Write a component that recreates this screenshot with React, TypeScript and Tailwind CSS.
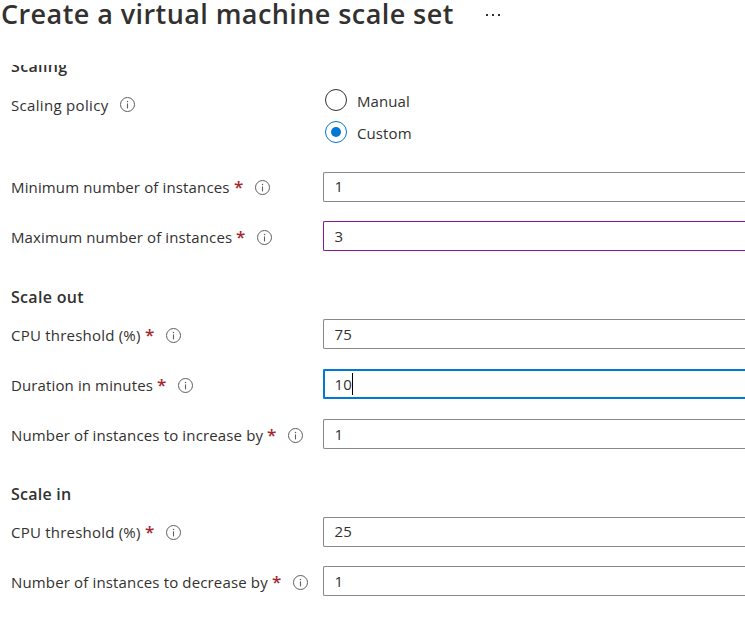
import React from 'react';

function InfoIcon() {
  return (
    <svg viewBox="0 0 16 16" className="size-4 shrink-0" fill="none">
      <circle cx="7.5" cy="7.5" r="7" stroke="#605e5c" strokeWidth="1" />
      <path d="M7.5 6.4v5" stroke="#605e5c" strokeWidth="1.1" />
      <circle cx="7.5" cy="4.4" r="0.75" fill="#605e5c" />
    </svg>
  );
}

type RowProps = {
  label: string;
  width: string;
  tracking: string;
  value: string;
  gap?: string;
  raised?: boolean;
  tone?: 'normal' | 'changed' | 'focused';
};

const tones = {
  normal: 'border-y border-l border-[#8a8886]',
  changed: 'border-y border-l border-[#881798]',
  focused: 'border-y-2 border-l-2 border-[#0078d4]',
};

function Row({ label, width, tracking, value, gap = '', raised = false, tone = 'normal' }: RowProps) {
  return (
    <div className={`flex h-[30px] ${gap}`}>
      <div className={`flex w-[312px] shrink-0 items-center ${raised ? 'pt-[2px]' : 'pt-[4px]'}`}>
        <span className={`-mt-[3px] shrink-0 whitespace-nowrap ${width} ${tracking}`}>{label}</span>
        <span className="-mt-[3px] ml-[4px] w-[21px] shrink-0 text-[17px] font-semibold text-[#a4262c]">*</span>
        <InfoIcon />
      </div>
      <div className={`flex h-[30px] flex-1 items-center rounded-l-[2px] ${tones[tone]} ${tone === 'focused' ? 'pl-[9.5px]' : 'pl-[10.5px]'}`}>
        <span className={`text-[15px] tracking-[0.1px] ${raised ? '-mt-[2px]' : '-mt-px'}`}>{value}</span>
        {tone === 'focused' && <span className="-mt-px h-[22px] w-px bg-black" />}
      </div>
    </div>
  );
}

function Radio({ label, checked = false }: { label: string; checked?: boolean }) {
  return (
    <div className="flex h-8 items-center gap-[10px]">
      <span className={`flex size-[22px] items-center justify-center rounded-full border ${checked ? 'border-[#0078d4]' : 'border-[#323130]'}`}>
        {checked && <span className="size-[10px] rounded-full bg-[#0078d4]" />}
      </span>
      <span className="pt-[2px] tracking-[0.1px]">{label}</span>
    </div>
  );
}

export default function App() {
  return (
    <main className="h-[624px] w-[745px] overflow-hidden bg-white font-['Open_Sans',sans-serif] text-[15px] leading-5 text-[#323130]">
      <header className="flex h-[65px] items-start pl-[1px]">
        <h1 className="w-[485px] whitespace-nowrap text-[27px] font-semibold leading-[28px] tracking-[0.42px]">Create a virtual machine scale set</h1>
        <div className="mt-[14px] flex gap-[4px]">
          <span className="size-[2px] bg-[#323130]" />
          <span className="size-[2px] bg-[#323130]" />
          <span className="size-[2px] bg-[#323130]" />
        </div>
      </header>
      <section className="pl-[11px]">
        <div className="h-[19px] overflow-hidden">
          <h2 className="-mt-[9px] text-[16px] font-semibold tracking-[0.35px]">Scaling</h2>
        </div>
        <div className="flex h-[88px]">
          <div className="flex h-[42px] w-[314px] items-center">
            <span className="w-[109px] whitespace-nowrap tracking-[0.32px]">Scaling policy</span>
            <InfoIcon />
          </div>
          <div>
            <Radio label="Manual" />
            <Radio label="Custom" checked />
          </div>
        </div>
        <Row label="Minimum number of instances" width="w-[219px]" tracking="tracking-[0.14px]" value="1" raised />
        <Row label="Maximum number of instances" width="w-[221px]" tracking="tracking-[0.12px]" value="3" gap="mt-[19px]" tone="changed" />
        <h2 className="mt-[36px] h-[32px] text-[16px] font-semibold tracking-[0.3px]">Scale out</h2>
        <Row label="CPU threshold (%)" width="w-[130px]" tracking="tracking-[0.22px]" value="75" />
        <Row label="Duration in minutes" width="w-[142px]" tracking="tracking-[0.12px]" value="10" gap="mt-5" tone="focused" />
        <Row label="Number of instances to increase by" width="w-[252px]" tracking="tracking-[0.15px]" value="1" gap="mt-5" />
        <h2 className="mt-[35px] h-[33px] text-[16px] font-semibold tracking-[0.25px]">Scale in</h2>
        <Row label="CPU threshold (%)" width="w-[130px]" tracking="tracking-[0.22px]" value="25" raised />
        <Row label="Number of instances to decrease by" width="w-[257px]" tracking="tracking-[0.15px]" value="1" gap="mt-[19px]" />
      </section>
    </main>
  );
}
